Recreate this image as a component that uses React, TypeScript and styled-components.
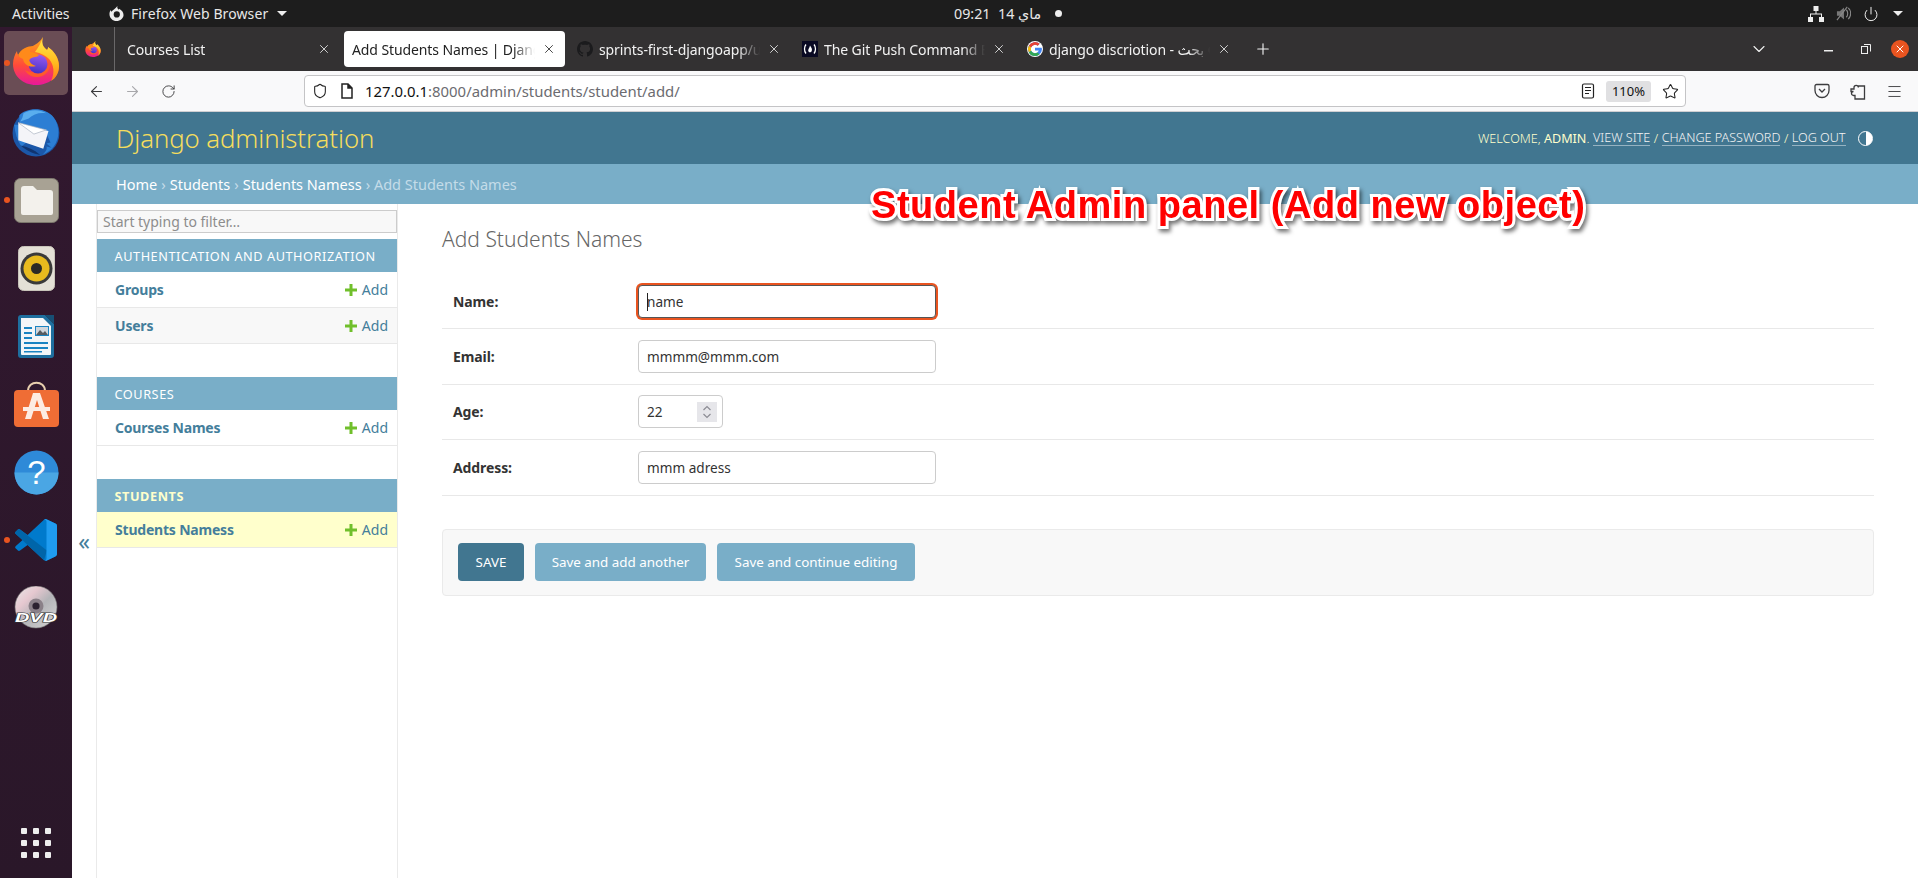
import React from "react";
import styled, { createGlobalStyle } from "styled-components";
import { ArrowLeft, ArrowRight, RotateCw, Shield, Star, Menu, X, Plus, ChevronDown, Power } from "lucide-react";

const Global = createGlobalStyle`
  html, body { margin: 0; padding: 0; height: 878px; overflow: hidden; background: #fff; }
  body { font-family: "Noto Sans", "DejaVu Sans", sans-serif; }
  * { box-sizing: border-box; }
`;

const Screen = styled.div`
  position: relative; width: 1918px; height: 878px; display: flex; flex-direction: column; overflow: hidden;
`;
const TopBar = styled.div`
  height: 27px; background: #1d1d1d; color: #e8e8e8; display: flex; align-items: center; font-size: 14px; flex: none;
`;
const Activities = styled.span`margin-left: 12px; width: 84px; letter-spacing: -0.1px;`;
const AppMenu = styled.div`display: flex; align-items: center; gap: 7px; width: 194px; margin-left: 13px; letter-spacing: 0.1px; white-space: nowrap;`;
const Caret = styled.span`
  width: 0; height: 0; border-left: 5px solid transparent; border-right: 5px solid transparent; border-top: 5px solid #eee; margin-left: 2px;
`;
const Clock = styled.div`
  display: flex; align-items: center; margin-left: 651px; gap: 14px; font-size: 14.3px; white-space: pre;
`;
const StatusDot = styled.span`width: 7px; height: 7px; border-radius: 50%; background: #eee;`;
const Tray = styled.div`display: flex; align-items: center; margin-left: auto; padding-right: 15px; gap: 12px;`;

const Body = styled.div`display: flex; flex: 1; min-height: 0;`;
const Dock = styled.div`
  width: 72px; flex: none; background: linear-gradient(#32182f, #2a1729); display: flex; flex-direction: column; align-items: center; padding: 3px 0 20px;
`;
const DockItem = styled.div<{ $active?: boolean; $running?: boolean }>`
  position: relative; width: 64px; height: 68px; display: flex; align-items: center; justify-content: center;
  ${p => p.$active ? "background: #6a4d55; border-radius: 5px; height: 64px; margin: 1px 0 3px; padding-bottom: 4px;" : ""}
  ${p => p.$running ? `&::before { content: ""; position: absolute; left: 0; top: 50%; margin-top: -3px; width: 6px; height: 6px; border-radius: 50%; background: #e95420; }` : ""}
`;
const AppGrid = styled.div`
  margin-top: auto; display: grid; grid-template-columns: repeat(3, 6px); gap: 6px;
  span { width: 6px; height: 6px; border-radius: 1px; background: #eee; }
`;

const Win = styled.div`flex: 1; min-width: 0; display: flex; flex-direction: column;`;
const TabStrip = styled.div`height: 44px; background: #333132; display: flex; align-items: center; color: #f2f2f2; flex: none;`;
const Pinned = styled.div`
  width: 43px; height: 44px; border-right: 1px solid #6a6869; display: flex; align-items: center; justify-content: center; margin-right: 4px; flex: none;
`;
const Tab = styled.div<{ $active?: boolean }>`
  width: 225px; height: 44px; flex: none; display: flex; align-items: center; padding: 0 12px 0 8px; gap: 6px; font-size: 14px; position: relative;
  color: ${p => p.$active ? "#222" : "#f2f2f2"};
  z-index: 0;
  ${p => p.$active ? `&::before { content: ""; position: absolute; z-index: -1; left: 0; right: 4px; top: 4px; bottom: 4px; background: #fff; border-radius: 4px; }` : ""}
`;
const TabTitle = styled.span`
  flex: 1; min-width: 0; white-space: nowrap; overflow: hidden; letter-spacing: -0.1px;
  mask-image: linear-gradient(to right, #000 calc(100% - 22px), transparent);
`;
const TabClose = styled(X)`flex: none; width: 14px; height: 14px; margin: 0 1px; stroke-width: 1.4;`;
const NewTab = styled(Plus)`width: 18px; height: 18px; margin-left: 10px; stroke-width: 1.5; flex: none;`;
const WinControls = styled.div`
  margin-left: auto; display: flex; align-items: center; padding-right: 9px;
`;
const WinClose = styled.span`
  width: 18px; height: 18px; border-radius: 50%; background: #e95420; color: #fff; display: flex; align-items: center; justify-content: center; margin-left: 20px;
`;
const MinIcon = styled.svg`margin-left: 55px;`;
const RestoreIcon = styled.svg`margin-left: 27px;`;

const Toolbar = styled.div`
  height: 41px; background: #f9f9fa; border-bottom: 1px solid #cfcfd2; display: flex; align-items: center; padding: 0 6px; flex: none; color: #333;
`;
const ToolBtn = styled.span<{ $dim?: boolean }>`
  width: 36px; height: 32px; display: flex; align-items: center; justify-content: center; color: ${p => p.$dim ? "#a8a8ab" : "#3c3c3e"};
`;
const UrlBar = styled.div`
  flex: 1; height: 32px; margin: 0 118px; background: #fff; border: 1px solid #c4c4c6; border-radius: 4px; display: flex; align-items: center; padding: 0 6px 0 7px; font-size: 14.9px; color: #6b6b70;
`;
const PageIcon = styled.svg`margin-left: 12px;`;
const UrlText = styled.span`margin-left: 11px; b { font-weight: 400; color: #111; }`;
const UrlRight = styled.div`margin-left: auto; display: flex; align-items: center; gap: 11px;`;
const Zoom = styled.span`
  width: 45px; height: 21px; border-radius: 3px; background: #e0e0e2; display: flex; align-items: center; justify-content: center; font-size: 13px; color: #111; 
`;

const Page = styled.div`flex: 1; min-height: 0; display: flex; flex-direction: column; background: #fff;`;
const Header = styled.div`
  height: 52px; background: #417690; display: flex; align-items: center; padding: 0 45px 0 44px; flex: none; color: #ffc;
`;
const Branding = styled.div`font-size: 25.8px; font-weight: 300; color: #f5dd5d; letter-spacing: -0.1px;`;
const UserTools = styled.div`
  margin-left: auto; font-size: 12.6px; font-weight: 300; display: flex; align-items: center; gap: 3.5px; text-transform: uppercase; color: #ffc;
  strong { font-weight: 400; }
`;
const UserLink = styled.span`color: #f4f4f4; border-bottom: 1px solid rgba(255,255,255,.45); line-height: 15px;`;
const ThemeIcon = styled.span`
  width: 15px; height: 15px; border-radius: 50%; border: 1.5px solid #fff; margin-left: 9px; background: linear-gradient(to right, transparent 50%, #fff 50%);
`;
const Crumbs = styled.div`
  height: 40px; background: #79aec8; display: flex; align-items: center; padding-left: 44px; flex: none; font-size: 14.5px; color: #c4dce8; gap: 4px; white-space: pre;
`;
const Crumb = styled.span`color: #fff;`;

const Main = styled.div`flex: 1; min-height: 0; display: flex;`;
const ToggleCol = styled.div`
  width: 25px; flex: none; border-right: 1px solid #eaeaea; display: flex; justify-content: center; color: #447e9b; font-size: 23px; line-height: 20px; padding-top: 327px;
`;
const Nav = styled.div`width: 301px; flex: none; border-right: 1px solid #eaeaea; padding-top: 6px; display: flex; flex-direction: column;`;
const Filter = styled.div`
  height: 23px; background: #f8f8f8; border: 1px solid #ccc; margin-bottom: 6px; font-size: 14px; color: #8d8d8d; padding-left: 5px; display: flex; align-items: center; width: 300px;
`;
const App = styled.div`margin-bottom: 33px; width: 300px;`;
const Caption = styled.div<{ $current?: boolean }>`
  height: 33px; background: #79aec8; display: flex; align-items: center; padding-left: 17.5px; text-transform: uppercase; font-size: 12.7px; letter-spacing: 0.57px;
  color: ${p => p.$current ? "#ffc" : "#fff"}; font-weight: ${p => p.$current ? 700 : 400};
`;
const ModelRow = styled.div<{ $alt?: boolean; $current?: boolean }>`
  height: 36px; display: flex; align-items: center; padding: 0 9px 0 18px; border-bottom: 1px solid #e8e8e8; font-size: 14px;
  background: ${p => p.$current ? "#ffc" : p.$alt ? "#f8f8f8" : "#fff"};
`;
const ModelName = styled.span`font-weight: 700; color: #447e9b; letter-spacing: -0.2px;`;
const AddLink = styled.span`margin-left: auto; color: #447e9b; display: flex; align-items: center; gap: 5px;`;
const PlusIcon = styled.svg`width: 12px; height: 12px; display: block;`;

const Content = styled.div`flex: 1; min-width: 0; padding: 0 44px 0 44px; display: flex; flex-direction: column;`;
const Title = styled.h1`
  margin: 22px 0 22px; font-size: 21px; font-weight: 300; line-height: 26px; color: #666;
`;
const FormRow = styled.div`
  height: 55.4px; border-bottom: 1px solid #e8e8e8; display: flex; align-items: center; padding: 0 0 0 11px;
`;
const Label = styled.label`width: 185px; font-size: 14px; font-weight: 700; color: #333; flex: none; letter-spacing: -0.1px;`;
const Field = styled.div<{ $focus?: boolean; $narrow?: boolean }>`
  position: relative; width: ${p => p.$narrow ? "85px" : "298px"}; height: 33px; background: #fff; border-radius: 4px; display: flex; align-items: center; padding-left: 8px; font-size: 13.6px; color: #333;
  border: 1px solid ${p => p.$focus ? "#555" : "#ccc"};
  ${p => p.$focus ? "box-shadow: 0 0 0 2px #e95420;" : ""}
`;
const TextCaret = styled.span`position: absolute; left: 8px; top: 7px; width: 1px; height: 18px; background: #222;`;
const Spinner = styled.span`
  position: absolute; right: 5px; top: 6px; width: 20px; height: 20px; background: #e6e6ea; display: flex; align-items: center; justify-content: center;
`;
const SubmitRow = styled.div`
  margin-top: 33px; height: 67px; background: #f8f8f8; border: 1px solid #eaeaea; border-radius: 4px; display: flex; align-items: center; padding: 0 15px; gap: 11px;
`;
const Btn = styled.span<{ $default?: boolean; $w: number }>`
  width: ${p => p.$w}px; height: 38px; border-radius: 4px; display: flex; align-items: center; justify-content: center; font-size: 13.4px; color: #fff;
  background: ${p => p.$default ? "#417690" : "#79aec8"};
`;
const Annotation = styled.div`
  position: absolute; left: 871px; top: 182px; font-family: "Liberation Sans", Arial, sans-serif; font-weight: 700; font-size: 38px; letter-spacing: 0.53px; line-height: 46px; color: #ff0000; white-space: nowrap;
  -webkit-text-stroke: 6px #fff; paint-order: stroke fill; filter: drop-shadow(2px 3px 2px rgba(0,0,0,.55));
`;

const Firefox = ({ size, id }: { size: number; id: string }) => (
  <svg width={size} height={size} viewBox="0 0 48 48">
    <defs>
      <linearGradient id={`${id}b`} x1="0.5" y1="0.1" x2="0.5" y2="1"><stop offset="0" stopColor="#ff9a1e" /><stop offset=".55" stopColor="#ff4a3a" /><stop offset="1" stopColor="#e8189a" /></linearGradient>
      <linearGradient id={`${id}y`} x1="0.5" y1="0" x2="0.5" y2="1"><stop offset="0" stopColor="#ffe94a" /><stop offset=".6" stopColor="#ffb91e" /><stop offset="1" stopColor="#ff7a1a" /></linearGradient>
      <linearGradient id={`${id}p`} x1="0.6" y1="0" x2="0.4" y2="1"><stop offset="0" stopColor="#9a59f0" /><stop offset="1" stopColor="#4332c4" /></linearGradient>
    </defs>
    <path d="M31 0c-2 6 0 10 4 13 1-1 1-2 1-3 6 4 11 11 11 19 0 11-10 19-23 19C11 48 1 39 1 27c0-5 2-10 4-13 0 2 1 4 2 5 2-5 7-8 12-9 4-2 9-5 12-10z" fill={`url(#${id}b)`} />
    <path d="M31 0c-2 6 0 10 4 13 1-1 1-2 1-3 6 4 11 11 11 19 0 7-3 12-8 15 4-8 3-16-2-22-3-3-8-6-14-7 3-4 6-9 8-15z" fill={`url(#${id}y)`} />
    <path d="M38 26a13 13 0 0 1-14 14c-5 0-9-3-11-7 5 3 13 3 18-1 3-2 5-4 7-6z" fill="#ff5a2a" />
    <circle cx="26" cy="27" r="9.5" fill={`url(#${id}p)`} />
    <path d="M6 18c3-6 9-9 16-9-3 2-4 4-4 6 3 0 7 1 9 4-3 1-8 1-10 4 1 3 3 5 7 6-6 2-12-1-13-7-2-1-4-2-5-4z" fill="#ff8a1a" />
  </svg>
);
const Thunderbird = () => (
  <svg width="50" height="50" viewBox="0 0 48 48">
    <circle cx="24" cy="25" r="22.5" fill="#1b57a8" />
    <path d="M8 8C14 1 32-1 41 10c6 8 6 20 0 28-2 3-6 6-11 8 3-3 5-5 4-8l5 1-5-4 4-1-6-12L16 20 8 15z" fill="#2c7ed4" />
    <path d="M12 6c6-4 16-4 22 0-7-1-13 1-17 5l-8 3 2-4z" fill="#5aaeee" />
    <path d="M3 17c1 8 3 15 7 21l6-5-8-16z" fill="#2c7ed4" />
    <path d="M7 15l25 7 4 1-5 17-24-8z" fill="#f4f4f8" />
    <path d="M7 15l15 11 12-4-4-1z" fill="#fff" stroke="#aeb6c4" strokeWidth=".7" />
    <path d="M9 37c5 4 11 8 19 9-6-5-12-8-19-9z" fill="#10346f" />
  </svg>
);
const Files = () => (
  <svg width="45" height="45" viewBox="0 0 45 45">
    <rect x=".5" y=".5" width="44" height="44" rx="6" fill="#a8a294" stroke="#7c786d" />
    <path d="M7 11a3 3 0 0 1 3-3h9l4 4h13a3 3 0 0 1 3 3v20a2 2 0 0 1-2 2H9a2 2 0 0 1-2-2z" fill="#f3f1ec" />
  </svg>
);
const Rhythmbox = () => (
  <svg width="37" height="45" viewBox="0 0 37 45">
    <rect x=".5" y=".5" width="36" height="44" rx="5" fill="#e4e0d6" stroke="#c8c4ba" />
    <circle cx="18.5" cy="22.5" r="16" fill="#3a3a3a" />
    <circle cx="18.5" cy="22.5" r="13" fill="#e8bb1e" />
    <circle cx="18.5" cy="22.5" r="5.5" fill="#2a2a26" />
  </svg>
);
const Writer = () => (
  <svg width="37" height="45" viewBox="0 0 37 45">
    <path d="M3 1h24l9 9v31a3 3 0 0 1-3 3H3a3 3 0 0 1-3-3V4a3 3 0 0 1 3-3z" fill="#1e6f9f" />
    <path d="M3 4h22l8 8v28a1 1 0 0 1-1 1H4a1 1 0 0 1-1-1z" fill="#f3f6f8" />
    <path d="M27 1l9 9V1z" fill="#174f74" />
    <path d="M6 13h8v2H6zM6 18h8v2H6zM6 23h8v2H6zM6 28h24v2H6zM6 33h24v2H6z M6 37h18v1.5H6z" fill="#1a84c2" />
    <rect x="17" y="12" width="14" height="10" fill="#1a84c2" />
    <rect x="18" y="13" width="12" height="8" fill="#cfd6dc" />
    <path d="M18 21l4-5 3 3 2-2 3 4z" fill="#565b60" />
  </svg>
);
const AppStore = () => (
  <svg width="45" height="47" viewBox="0 0 45 47">
    <path d="M14 10c0-11 17-11 17 0" fill="none" stroke="#e8cfae" strokeWidth="2" />
    <path d="M4 9h37a4 4 0 0 1 4 4v29a4 4 0 0 1-4 4H4a4 4 0 0 1-4-4V13a4 4 0 0 1 4-4z" fill="#ef6d35" />
    <path d="M19 12h7l9 26h-6l-6-19-6 19h-6z M9 26h27v4H9z" fill="#fdece2" />
  </svg>
);
const Help = () => (
  <svg width="45" height="45" viewBox="0 0 45 45">
    <circle cx="22.5" cy="22.5" r="22" fill="#2e8ad8" />
    <path d="M.5 22.5h44a22 22 0 0 1-44 0z" fill="#4aa6e4" />
    <text x="22.5" y="34" fontFamily="Liberation Sans, sans-serif" fontSize="33" fill="#fff" textAnchor="middle">?</text>
  </svg>
);
const VSCode = () => (
  <svg width="42" height="42" viewBox="0 0 100 100">
    <path d="M71 99a6 6 0 0 0 5 0l20-10a6 6 0 0 0 4-5V16a6 6 0 0 0-4-5L76 1a6 6 0 0 0-7 1L30 38 12 25a4 4 0 0 0-5 0l-5 5a4 4 0 0 0 0 6l16 14L2 64a4 4 0 0 0 0 6l5 5a4 4 0 0 0 5 0l18-13 39 36z" fill="#007acc" />
    <path d="M7 25a4 4 0 0 1 5 0l64 50-7 23L2 36a4 4 0 0 1 0-6z" fill="#0065a9" />
    <path d="M71 99a6 6 0 0 0 5 0l20-10a6 6 0 0 0 4-5V16a6 6 0 0 0-4-5L76 1a6 6 0 0 0-7 1c2-1 6 0 6 4v88c0 3-2 5-4 5z" fill="#1f9cf0" />
  </svg>
);
const DVD = () => (
  <svg width="44" height="44" viewBox="0 0 44 44">
    <defs><linearGradient id="dvd" x1="0" y1="0" x2="1" y2="1"><stop offset="0" stopColor="#e8e8e8" /><stop offset=".3" stopColor="#e6c8d0" /><stop offset=".55" stopColor="#b4b4b8" /><stop offset="1" stopColor="#d8d8d8" /></linearGradient></defs>
    <circle cx="22" cy="21" r="21" fill="url(#dvd)" stroke="#777" strokeWidth=".6" />
    <circle cx="22" cy="20" r="7.500" fill="#8a8088" />
    <circle cx="22" cy="20" r="3.600" fill="#2b2230" />
    <text x="22" y="36" fontFamily="Liberation Sans, sans-serif" fontWeight="700" fontStyle="italic" fontSize="13" textAnchor="middle" fill="#fff" stroke="#333" strokeWidth="1.2" paintOrder="stroke" textLength="42" lengthAdjust="spacingAndGlyphs">DVD</text>
  </svg>
);
const GitHub = () => (
  <svg width="16" height="16" viewBox="0 0 16 16" fill="#1b1b1d" style={{ flex: "none" }}>
    <path d="M8 0C3.6 0 0 3.6 0 8c0 3.5 2.3 6.5 5.5 7.6.4.1.5-.2.5-.4v-1.4c-2.2.5-2.7-1-2.7-1-.4-.9-.9-1.2-.9-1.2-.7-.5.1-.5.1-.5.8.1 1.2.8 1.2.8.7 1.2 1.9.9 2.3.7.1-.5.3-.9.5-1.1-1.8-.2-3.6-.9-3.6-4 0-.9.3-1.6.8-2.1-.1-.2-.4-1 .1-2.1 0 0 .7-.2 2.2.8.6-.2 1.3-.3 2-.3s1.4.1 2 .3c1.5-1 2.2-.8 2.2-.8.4 1.1.2 1.9.1 2.1.5.6.8 1.3.8 2.1 0 3.1-1.9 3.7-3.6 3.9.3.2.5.7.5 1.5v2.2c0 .2.1.5.6.4C13.7 14.5 16 11.5 16 8c0-4.4-3.6-8-8-8z" />
  </svg>
);
const FreeCodeCamp = () => (
  <svg width="16" height="16" viewBox="0 0 16 16" style={{ flex: "none" }}>
    <rect width="16" height="16" fill="#0a0a23" />
    <path d="M4 3.5C2 6 2 10 4 12.5M12 3.5c2 2.5 2 6.500 0 9" fill="none" stroke="#fff" strokeWidth="1.3" />
    <path d="M8 4.500c1 1.800 2.500 3 1.800 5.200-.3 1-1.200 1.500-1.800 1.500s-1.500-.5-1.800-1.500C6 8.500 7.500 7 8 4.500z" fill="#fff" />
  </svg>
);
const Google = () => (
  <svg width="16" height="16" viewBox="0 0 48 48" style={{ flex: "none" }}>
    <circle cx="24" cy="24" r="24" fill="#fff" />
    <path d="M43.600 20H24v8.500h11.300C33.700 33.400 29.300 36.500 24 36.500A12.500 12.500 0 1 1 32 14.400l6-6A21 21 0 1 0 45 24c0-1.400-.6-2.700-1.400-4z" fill="#4285f4" />
    <path d="M5.400 14.300l7 5.100A12.500 12.500 0 0 1 32 14.400l6-6A21 21 0 0 0 5.400 14.300z" fill="#ea4335" />
    <path d="M24 45c5.300 0 10-2 13.600-5.300l-6.500-5.400A12.500 12.500 0 0 1 12.400 29l-7 5.300A21 21 0 0 0 24 45z" fill="#34a853" />
    <path d="M5.400 14.300a21 21 0 0 0 0 19.800l7-5.300a12.500 12.500 0 0 1 0-9.500z" fill="#fbbc05" />
  </svg>
);
const Plusmark = () => (
  <PlusIcon viewBox="0 0 12 12"><path d="M4.500 0h3v4.500H12v3H7.500V12h-3V7.500H0v-3h4.500z" fill="#70bf2b" /></PlusIcon>
);
const Rows = [
  { cap: "Authentication and Authorization", items: ["Groups", "Users"] },
  { cap: "Courses", items: ["Courses Names"] },
  { cap: "Students", items: ["Students Namess"], current: true },
];

export default function AppRoot() {
  return (
    <Screen>
      <Global />
      <TopBar>
        <Activities>Activities</Activities>
        <AppMenu>
          <svg width="15" height="15" viewBox="0 0 16 16"><path d="M9 0c-.6 2 .3 3 1.500 4 .2-.4.3-.7.3-1C13.500 4.500 15.500 6.500 15.500 9.500 15.500 13 12 16 8 16S.5 13 .5 8.500C.5 7 1 5.500 2 4.300c0 .7.2 1.300.5 1.800C4 4 7 3 9 0z" fill="#eee" /><circle cx="8.300" cy="9" r="3.300" fill="#1d1d1d" /></svg>
          Firefox Web Browser<Caret />
        </AppMenu>
        <Clock>
          <span>09:21  14 ماي</span>
          <StatusDot />
        </Clock>
        <Tray>
          <svg width="16" height="16" viewBox="0 0 16 16" fill="#eee"><rect x="5.500" y="0" width="5" height="5" /><rect x="0" y="11" width="5" height="5" /><rect x="11" y="11" width="5" height="5" /><path d="M7.500 5h1v2.500H14V11h-1V8.500H3V11H2V7.500h5.500z" /></svg>
          <svg width="15" height="15" viewBox="0 0 16 16"><path d="M1 5.500h3L8.500 1.500v13L4 10.500H1z" fill="#777" /><path d="M11 4c2 2 2 6 0 8M13 2c3.500 3 3.500 9 0 12" stroke="#888" fill="none" strokeWidth="1.200" /><path d="M1 15L12 1" stroke="#888" strokeWidth="1.200" /></svg>
          <Power size={16} color="#eee" strokeWidth={1.500} />
          <Caret />
        </Tray>
      </TopBar>
      <Body>
        <Dock>
          <DockItem $active $running><Firefox size={48} id="ffd" /></DockItem>
          <DockItem><Thunderbird /></DockItem>
          <DockItem $running><Files /></DockItem>
          <DockItem><Rhythmbox /></DockItem>
          <DockItem><Writer /></DockItem>
          <DockItem><AppStore /></DockItem>
          <DockItem><Help /></DockItem>
          <DockItem $running><VSCode /></DockItem>
          <DockItem><DVD /></DockItem>
          <AppGrid>{Array.from({ length: 9 }, (_, i) => <span key={i} />)}</AppGrid>
        </Dock>
        <Win>
          <TabStrip>
            <Pinned><Firefox size={16} id="fft" /></Pinned>
            <Tab><TabTitle>Courses List</TabTitle><TabClose /></Tab>
            <Tab $active><TabTitle>Add Students Names | Django site admin</TabTitle><TabClose /></Tab>
            <Tab><GitHub /><TabTitle>sprints-first-djangoapp/urls.py</TabTitle><TabClose /></Tab>
            <Tab><FreeCodeCamp /><TabTitle>The Git Push Command Explained</TabTitle><TabClose /></Tab>
            <Tab><Google /><TabTitle>django discriotion - بحث Google</TabTitle><TabClose /></Tab>
            <NewTab />
            <WinControls>
              <ChevronDown size={20} strokeWidth={1.300} />
              <MinIcon width="10" height="10" viewBox="0 0 10 10"><rect y="6" width="9" height="1.500" fill="#eee" /></MinIcon>
              <RestoreIcon width="10" height="10" viewBox="0 0 10 10" fill="none" stroke="#eee"><rect x=".5" y="2.500" width="6" height="7" /><path d="M3 .5h6.500v7" /></RestoreIcon>
              <WinClose><X size={12} strokeWidth={2} /></WinClose>
            </WinControls>
          </TabStrip>
          <Toolbar>
            <ToolBtn><ArrowLeft size={17} strokeWidth={1.500} /></ToolBtn>
            <ToolBtn $dim><ArrowRight size={17} strokeWidth={1.500} /></ToolBtn>
            <ToolBtn><RotateCw size={15} strokeWidth={1.500} /></ToolBtn>
            <UrlBar>
              <Shield size={16} strokeWidth={1.600} color="#222" />
              <PageIcon width="14" height="16" viewBox="0 0 14 16" fill="none" stroke="#222" strokeWidth="1.500"><path d="M2 1h6l4 4v10H2z" /><path d="M8 1v4h4" fill="#222" /></PageIcon>
              <UrlText><b>127.0.0.1</b>:8000/admin/students/student/add/</UrlText>
              <UrlRight>
                <svg width="14" height="16" viewBox="0 0 14 16" fill="none" stroke="#222" strokeWidth="1.200"><rect x="1.500" y="1" width="11" height="14" rx="1.500" /><path d="M4 4.500h6M4 7.500h6M4 10.500h4" /></svg>
                <Zoom>110%</Zoom>
                <Star size={17} strokeWidth={1.500} color="#222" />
              </UrlRight>
            </UrlBar>
            <ToolBtn><svg width="16" height="16" viewBox="0 0 16 16" fill="none" stroke="#3c3c3e" strokeWidth="1.300"><path d="M2.500 1.500h11a1.500 1.500 0 0 1 1.500 1.500v4.500a7 7 0 0 1-14 0V3a1.500 1.500 0 0 1 1.500-1.500z" /><path d="M5 6l3 3 3-3" /></svg></ToolBtn>
            <ToolBtn><svg width="16" height="18" viewBox="0 0 16 18" fill="none" stroke="#3c3c3e" strokeWidth="1.300"><path d="M1 7h3V5.500a2.200 2.200 0 0 1 4.400 0V4h6.100v13H5v-3.500H3.500a2 2 0 0 1 0-4H1z" /></svg></ToolBtn>
            <ToolBtn><Menu size={17} strokeWidth={1.300} /></ToolBtn>
          </Toolbar>
          <Page>
            <Header>
              <Branding>Django administration</Branding>
              <UserTools>
                <span>Welcome, <strong>admin</strong>.</span>
                <UserLink>View site</UserLink>/
                <UserLink>Change password</UserLink>/
                <UserLink>Log out</UserLink>
                <ThemeIcon />
              </UserTools>
            </Header>
            <Crumbs>
              <Crumb>Home</Crumb>›<Crumb>Students</Crumb>›<Crumb>Students Namess</Crumb>› Add Students Names
            </Crumbs>
            <Main>
              <ToggleCol>«</ToggleCol>
              <Nav>
                <Filter>Start typing to filter…</Filter>
                {Rows.map(g => (
                  <App key={g.cap}>
                    <Caption $current={g.current}>{g.cap}</Caption>
                    {g.items.map((it, i) => (
                      <ModelRow key={it} $alt={i === 1} $current={g.current}>
                        <ModelName>{it}</ModelName>
                        <AddLink><Plusmark />Add</AddLink>
                      </ModelRow>
                    ))}
                  </App>
                ))}
              </Nav>
              <Content>
                <Title>Add Students Names</Title>
                <FormRow><Label>Name:</Label><Field $focus><TextCaret />name</Field></FormRow>
                <FormRow><Label>Email:</Label><Field>mmmm@mmm.com</Field></FormRow>
                <FormRow><Label>Age:</Label><Field $narrow>22<Spinner><svg width="10" height="16" viewBox="0 0 10 16" fill="none" stroke="#8c8c94" strokeWidth="1.200"><path d="M1.500 6L5 2.500 8.500 6M1.500 10L5 13.500 8.500 10" /></svg></Spinner></Field></FormRow>
                <FormRow><Label>Address:</Label><Field>mmm adress</Field></FormRow>
                <SubmitRow>
                  <Btn $default $w={66}>SAVE</Btn>
                  <Btn $w={171}>Save and add another</Btn>
                  <Btn $w={198}>Save and continue editing</Btn>
                </SubmitRow>
              </Content>
            </Main>
          </Page>
        </Win>
      </Body>
      <Annotation>Student Admin panel (Add new object)</Annotation>
    </Screen>
  );
}
